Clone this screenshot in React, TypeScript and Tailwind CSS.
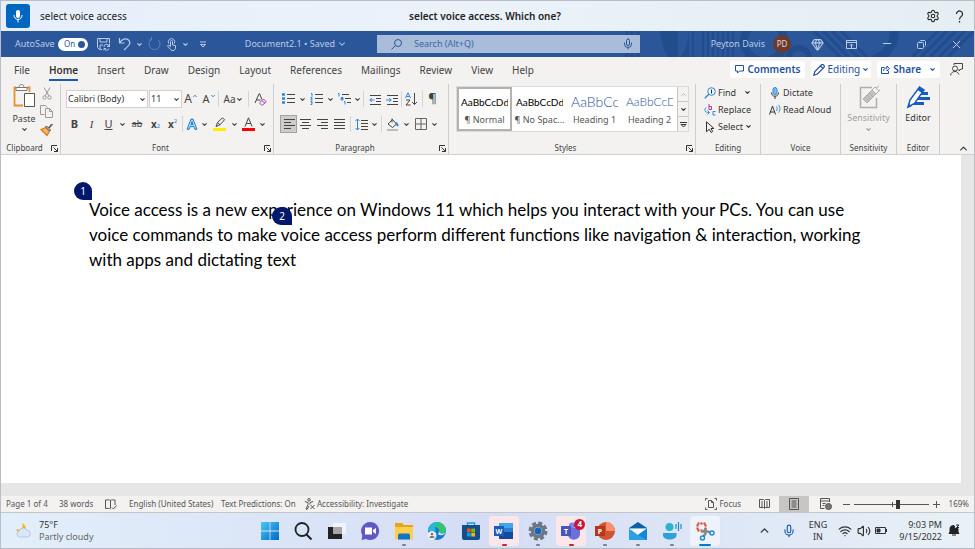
import type { ReactNode } from "react";
import { ChevronDown, ChevronUp, Gem, Mic, Settings, Volume2, Wifi, X } from "lucide-react";

interface IconProps {
  w?: number;
  h?: number;
  children: ReactNode;
}

// 1px line drawing, sized one to one with its viewBox
function Icon({ w = 14, h = 14, children }: IconProps) {
  return (
    <svg width={w} height={h} viewBox={`0 0 ${w} ${h}`} fill="none" stroke="currentColor" strokeWidth="1" className="shrink-0" aria-hidden="true">
      {children}
    </svg>
  );
}

interface ToolProps {
  label: string;
  className?: string;
  children: ReactNode;
}

function Tool({ label, className = "w-[17px]", children }: ToolProps) {
  return (
    <button type="button" aria-label={label} className={`flex h-[18px] shrink-0 items-center justify-center ${className}`}>
      {children}
    </button>
  );
}

function More({ label, className = "w-[10px]" }: { label: string; className?: string }) {
  return (
    <Tool label={label} className={className}>
      <ChevronDown size={7} strokeWidth={4} />
    </Tool>
  );
}

function Sep({ className = "mx-[2px]" }: { className?: string }) {
  return <span className={`h-[16px] w-px shrink-0 bg-[#d6d4d2] ${className}`} />;
}

function Launcher({ label }: { label: string }) {
  return (
    <button type="button" aria-label={label} className="absolute right-[2px] bottom-[2px]">
      <Icon w={7} h={7}>
        <path d="M.5 6V.5H6M2.500 2.500l4 4M6.500 3v3.500H3" />
      </Icon>
    </button>
  );
}

interface GroupProps {
  title: string;
  className: string;
  launcher?: boolean;
  children: ReactNode;
}

function Group({ title, className, launcher, children }: GroupProps) {
  return (
    <section className={`relative flex shrink-0 flex-col border-r border-[#cfcdcb] ${className}`}>
      <div className="h-[58px]">{children}</div>
      <h2 className="text-center text-[8px] leading-[12px] text-[#444]">{title}</h2>
      {launcher && <Launcher label={`${title} settings`} />}
    </section>
  );
}

function VoiceBar() {
  return (
    <header className="flex h-[31px] shrink-0 items-center border-t border-[#b9bec4] bg-gradient-to-r from-[#e6effa] via-[#ebf2fa] to-[#e4eef3] pr-[10px] pl-[5px] text-[10px] text-[#222]">
      <div className="flex flex-1 items-center gap-[10px]">
        <button type="button" aria-label="Microphone" className="flex size-[24px] items-center justify-center rounded-[3px] bg-[#0067c0] text-white">
          <svg width="12" height="14" viewBox="0 0 12 14" aria-hidden="true">
            <rect x="4" y="1" width="4" height="8" rx="2" fill="currentColor" />
            <path d="M2 6.500a4 4 0 0 0 8 0M6 10.500V13" fill="none" stroke="currentColor" strokeWidth="1" strokeLinecap="round" />
          </svg>
        </button>
        <span>select voice access</span>
      </div>
      <strong className="font-semibold">select voice access. Which one?</strong>
      <div className="flex flex-1 items-center justify-end gap-[15px]">
        <button type="button" aria-label="Settings">
          <Settings size={14} strokeWidth={1.8} />
        </button>
        <button type="button" aria-label="Help">
          <Icon w={9} h={13}>
            <path d="M1.500 4a3 3 0 1 1 5 2.200C5.200 7.300 4.500 7.800 4.500 9.500M4.500 11v1.500" strokeWidth="1.200" />
          </Icon>
        </button>
      </div>
    </header>
  );
}

function TitleArt() {
  return (
    <svg className="absolute top-0 right-0 h-full" width="350" height="26" viewBox="0 0 350 26" fill="none" stroke="#214d8c" aria-hidden="true">
      <path d="M3 0v26M8 0v26M14 0v26" strokeWidth="3" />
      <path d="M36 0c1 12 4 18 8 26h10V0zM65 0v26h-8c5-8 7-16 8-26z" fill="#214d8c" stroke="none" />
      <path d="M69 0v26M79 0v26M84 0v26M89 0v26M94 0v26M99 0v26M104 0v26M109 0v26" strokeWidth="2" />
      <circle cx="140" cy="10" r="20" strokeWidth="8" />
      <circle cx="175" cy="27" r="10" strokeWidth="6" />
      <path d="M190 0l26 26M199 0l26 26M208 0l26 26M217 0l26 26" strokeWidth="3" />
      <path d="M270 0c1 14-8 24-20 29" strokeWidth="9" />
      <path d="M288 26l26-26M297 26l26-26M306 26l26-26M315 26l26-26M324 26l26-26" strokeWidth="3" />
    </svg>
  );
}

function TitleBar() {
  return (
    <div className="relative flex h-[26px] shrink-0 items-center bg-[#2b579a] text-[9px] text-[#b9cbe6]">
      <TitleArt />
      <div className="relative flex w-[376px] shrink-0 items-center pl-[14px]">
        <label htmlFor="autosave" className="w-[43px]">AutoSave</label>
        <div className="relative mr-[5px] flex h-[13px] w-[30px] items-center rounded-full bg-white pl-[6px] text-[8px] text-[#2b579a]">
          On
          <span className="absolute right-[3px] size-[7px] rounded-full bg-[#2b579a]" />
          <input id="autosave" type="checkbox" defaultChecked className="absolute inset-0 opacity-0" />
        </div>
        <Tool label="Save" className="w-[20px]">
          <Icon w={13} h={13}>
            <path d="M5 11.500H2.500L.5 9.500V.5h12v5M3 .5V4h7V.5M3 11V7h3" />
            <path d="M7 9a2.500 2.500 0 0 1 5-.5M12.500 6v2.500H10M12 10.500a2.500 2.500 0 0 1-4.500.5M7 12.500V10.500h2" />
          </Icon>
        </Tool>
        <Tool label="Undo" className="w-[23px]">
          <Icon w={13} h={14}>
            <path d="M1.500 1v5h5M1.500 6C4 2 8 .8 10.500 3c3 3 1 5-4.500 10" strokeWidth="1.200" />
          </Icon>
        </Tool>
        <More label="Undo list" className="w-[7px]" />
        <Tool label="Redo" className="w-[22px] text-[#5c82bd]">
          <Icon w={13} h={14}>
            <path d="M3.500 2.500a5.500 5.500 0 1 0 6.500.3M3.500 0v3H.5" />
          </Icon>
        </Tool>
        <Tool label="Touch mode" className="w-[13px]">
          <Icon w={11} h={14}>
            <path d="M4.500 12.500L1.500 9l1-1 2 1.500V4.500a1 1 0 0 1 2 0V8l3 .6v2.900L8 13.500H6z" />
            <path d="M2.800 6.500a3.200 3.200 0 1 1 5.400 0" />
          </Icon>
        </Tool>
        <More label="Touch options" className="w-[15px]" />
        <Tool label="Customize toolbar" className="w-[20px]">
          <Icon w={8} h={7}>
            <path d="M1 1h6M1.500 3.500h5L4 6z" />
          </Icon>
        </Tool>
        <button type="button" className="ml-auto flex items-center gap-[2px] pr-[30px] whitespace-nowrap">
          Document2.1 • Saved
          <ChevronDown size={10} strokeWidth={2.5} />
        </button>
      </div>
      <div className="relative flex h-[18px] w-[263px] items-center bg-[#a9bcd9] px-[14px] text-[#2b579a]">
        <Icon w={11} h={11}>
          <circle cx="7" cy="4" r="3.500" />
          <path d="M4.500 6.500L.5 10.500" />
        </Icon>
        <input type="text" aria-label="Search" placeholder="Search (Alt+Q)" className="ml-[12px] min-w-0 flex-1 bg-transparent outline-none placeholder:text-[#3c67a8]" />
        <button type="button" aria-label="Dictate search" className="-mr-[8px]">
          <Mic size={12} strokeWidth={2} />
        </button>
      </div>
      <div className="relative ml-auto flex items-center">
        <span>Peyton Davis</span>
        <span className="mr-[9px] ml-[8px] flex size-[18px] items-center justify-center rounded-full bg-[#6b3a2e] text-[8px] text-[#e8d8d4]">PD</span>
        <Tool label="Premium" className="w-[34px]">
          <Gem size={13} strokeWidth={2} />
        </Tool>
        <Tool label="Ribbon display options" className="w-[35px]">
          <Icon w={11} h={9}>
            <path d="M.5.5h10v8H.5zM.5 2.500h10M5.500 8V4.200M4 5.500l1.500-1.500L7 5.500" />
          </Icon>
        </Tool>
        <Tool label="Minimize" className="w-[35px]">
          <Icon w={8} h={8}>
            <path d="M0 3.500h8" />
          </Icon>
        </Tool>
        <Tool label="Restore" className="w-[35px]">
          <Icon w={9} h={9}>
            <rect x=".5" y="2.500" width="6" height="6" rx="1" />
            <path d="M2.500 1.500l1-1h4l1 1v4l-1 1" />
          </Icon>
        </Tool>
        <Tool label="Close" className="w-[35px]">
          <Icon w={9} h={9}>
            <path d="M1 1l7 7M8 1L1 8" />
          </Icon>
        </Tool>
      </div>
    </div>
  );
}

const tabs = ["File", "Home", "Insert", "Draw", "Design", "Layout", "References", "Mailings", "Review", "View", "Help"];

function TabRow() {
  return (
    <nav className="flex h-[25px] shrink-0 items-center text-[10px] text-[#444]">
      <div className="flex gap-[19px] pl-[13px]">
        {tabs.map((tab) => (
          <a key={tab} href="#" className={tab === "Home" ? "border-b-2 border-[#185abd] pt-[2px] leading-[18px] font-semibold text-[#333]" : "pt-[2px] leading-[18px]"}>
            {tab}
          </a>
        ))}
      </div>
      <div className="ml-auto flex items-center gap-[6px] pr-[11px] text-[#1f4e9e]">
        <button type="button" className="flex h-[17px] items-center gap-[3px] rounded-[2px] bg-white px-[5px] font-semibold">
          <Icon w={9} h={9}>
            <path d="M.5.5h8v5.500h-4l-2 2V6h-2z" />
          </Icon>
          Comments
        </button>
        <button type="button" className="flex h-[17px] items-center gap-[2px] rounded-[2px] bg-white px-[2px]">
          <Icon w={12} h={12}>
            <path d="M.8 11.200l1-3.700L8.500.8c1.500-1 3.500 1 2.500 2.500L4.400 10zM7.500 2l2.500 2.500" strokeWidth="1.200" />
          </Icon>
          Editing
          <ChevronDown size={7} strokeWidth={4} />
        </button>
        <button type="button" className="flex h-[17px] items-center gap-[3px] rounded-[2px] bg-white px-[4px] font-semibold">
          <Icon w={9} h={9}>
            <path d="M3.500 2.500h-3v6h7V6M2.500 6c0-2 1-3 3.500-3V1l2.500 2.500L6 6V4.300" />
          </Icon>
          Share
          <span className="ml-[5px]">
            <ChevronDown size={7} strokeWidth={4} />
          </span>
        </button>
        <button type="button" aria-label="Presence" className="ml-[4px] text-[#444]">
          <Icon w={13} h={13}>
            <circle cx="5" cy="5.500" r="2.500" />
            <path d="M.5 12.500C1 9.500 3 8.500 5 8.500s3 1 4 3M4 2V.5h8.500V6H11L9 8V6" />
          </Icon>
        </button>
      </div>
    </nav>
  );
}

function Lines({ rows, w = 12 }: { rows: [number, number][]; w?: number }) {
  return (
    <Icon w={w} h={12}>
      {rows.map(([x1, x2], i) => (
        <path key={i} d={`M${x1} ${i * 3 + 1.5}H${x2}`} />
      ))}
    </Icon>
  );
}

function ClipboardGroup() {
  return (
    <Group title="Clipboard" className="w-[60px] pl-[1px] [&>h2]:pr-[13px]" launcher>
      <div className="flex gap-[2px] pl-[10px]">
        <button type="button" className="flex w-[24px] flex-col items-center text-[9px] leading-[13px] text-[#444]">
          <Icon w={24} h={24}>
            <path d="M4 3.500H2.500v18H11M15 3.500h2.500V8" stroke="#e8912d" strokeWidth="1.800" />
            <path d="M4 3.500h11v3H4zM7 3.500c0-4 5-4 5 0" stroke="#777" fill="#fff" />
            <path d="M12.500 9.500h10v13h-10z" stroke="#555" fill="#fff" />
          </Icon>
          <span className="mt-[4px]">Paste</span>
          <ChevronDown size={7} strokeWidth={4} className="mt-[1px]" />
        </button>
        <div className="flex flex-col text-[#9a9a9a]">
          <Tool label="Cut">
            <Icon w={10} h={13}>
              <path d="M2 .5l5 8.500M8 .5L3 9" />
              <circle cx="2.500" cy="10.500" r="1.700" />
              <circle cx="7.500" cy="10.500" r="1.700" />
            </Icon>
          </Tool>
          <Tool label="Copy">
            <Icon w={13} h={13}>
              <path d="M4.500 9.500h-4v-9h5l2 2M5.500 3.500h4l3 3v6h-7zM9.500 3.500v3h3" />
            </Icon>
          </Tool>
          <Tool label="Format painter">
            <Icon w={13} h={13}>
              <path d="M1 6.500l5-2 3.500 3.500-2.500 4.500z" fill="#f7b267" stroke="#e07b1a" strokeWidth="1.300" />
              <path d="M5.500 4l1-1 4 4-1 1zM8.500 5l3-4 1 1-3.500 3" stroke="#444" fill="#fff" />
            </Icon>
          </Tool>
        </div>
      </div>
    </Group>
  );
}

function FontGroup() {
  return (
    <Group title="Font" className="w-[213px] pl-[5px] [&>h2]:pr-[18px]" launcher>
      <div className="flex h-[25px] items-center pt-[5px] text-[#444]">
        <div className="relative flex h-[18px] w-[82px] items-center border border-[#d2d0ce] bg-white">
          <select aria-label="Font" className="w-full appearance-none pl-px text-[9px] text-[#333] outline-none">
            <option>Calibri (Body)</option>
          </select>
          <ChevronDown size={7} strokeWidth={4} className="absolute right-px" />
        </div>
        <div className="relative ml-px flex h-[18px] w-[33px] items-center border border-[#d2d0ce] bg-white">
          <select aria-label="Font size" className="w-full appearance-none pl-px text-[9px] text-[#333] outline-none">
            <option>11</option>
          </select>
          <ChevronDown size={7} strokeWidth={4} className="absolute right-px" />
        </div>
        <Tool label="Grow font" className="w-[18px] text-[12px]">
          A<ChevronUp size={6} strokeWidth={4} color="#2b88d8" className="mb-[7px]" />
        </Tool>
        <Tool label="Shrink font" className="w-[18px] text-[11px]">
          A<ChevronDown size={6} strokeWidth={4} color="#2b88d8" className="mb-[7px]" />
        </Tool>
        <Sep className="mr-[3px]" />
        <Tool label="Change case" className="w-[22px] text-[10px]">
          Aa<ChevronDown size={7} strokeWidth={4} />
        </Tool>
        <Sep className="mx-[4px]" />
        <Tool label="Clear formatting" className="w-[14px]">
          <Icon w={13} h={13}>
            <path d="M1 10L5 .8h.6L8 6.500M2.500 7h4" stroke="#444" />
            <path d="M6 9.500l3.500-3.500 2.700 2.700L8.700 12H7.500L6 10.700zM8 7.500l2.700 2.700" stroke="#a43ab5" />
          </Icon>
        </Tool>
      </div>
      <div className="flex h-[25px] items-center pt-[5px] text-[11px] text-[#444]">
        <Tool label="Bold"><b>B</b></Tool>
        <Tool label="Italic"><i className="font-['Liberation_Serif',serif]">I</i></Tool>
        <Tool label="Underline"><u>U</u></Tool>
        <More label="Underline style" />
        <Tool label="Strikethrough" className="w-[20px] text-[9px]"><s>ab</s></Tool>
        <Tool label="Subscript">
          <b className="text-[10px]">x</b><sub className="text-[6px] text-[#2b88d8]">2</sub>
        </Tool>
        <Tool label="Superscript">
          <b className="text-[10px]">x</b><sup className="text-[6px] text-[#2b88d8]">2</sup>
        </Tool>
        <Sep className="mx-px" />
        <Tool label="Text effects" className="w-[15px]">
          <Icon w={12} h={12}>
            <path d="M1 11.300L5 1h2l4 10.300H8.800L7.800 8.500H4.200l-1 2.800zM5 6.500h2L6 3.500z" stroke="#1a7fd4" fill="#b5dcf7" />
          </Icon>
        </Tool>
        <More label="Text effects list" />
        <Tool label="Highlight" className="w-[20px]">
          <Icon w={13} h={14}>
            <path d="M0 12.500h13" stroke="#ffee00" strokeWidth="3" />
            <path d="M3 9.500l1.500-4L9.500.8l2 2-4.500 5zM4.500 5.500l2.500 2.300" />
          </Icon>
        </Tool>
        <More label="Highlight colour" />
        <Tool label="Font colour" className="w-[18px]">
          <Icon w={13} h={14}>
            <path d="M0 12.500h13" stroke="#f00" strokeWidth="3" />
            <path d="M3 9.500L6.500.8 10 9.500M4.200 6.500h4.600" />
          </Icon>
        </Tool>
        <More label="Font colours" />
      </div>
    </Group>
  );
}

function ParagraphGroup() {
  return (
    <Group title="Paragraph" className="w-[175px] pl-[6px] [&>h2]:pr-[18px]" launcher>
      <div className="flex h-[25px] items-center pt-[5px] text-[#444]">
        <Tool label="Bullets">
          <Icon w={13} h={12}>
            <path d="M5 1.500h8M5 5.500h8M5 9.500h8" />
            <path d="M0 1.500h3M0 5.500h3M0 9.500h3" stroke="#2b88d8" strokeWidth="2.500" />
          </Icon>
        </Tool>
        <More label="Bullet styles" />
        <Tool label="Numbering" className="w-[18px]">
          <Icon w={13} h={12}>
            <path d="M5 1.500h8M5 5.500h8M5 9.500h8" />
            <path d="M1 .5h1v3M.5 4.500H2v1.500H1v1h1.500M.5 8.500H2v3H.5M1 10h1" stroke="#2b88d8" />
          </Icon>
        </Tool>
        <More label="Number styles" />
        <Tool label="Multilevel list" className="w-[18px]">
          <Icon w={13} h={12}>
            <path d="M4 1.500h7M7 5.500h6M9 9.500h4" />
            <path d="M0 .5h1v3M3 4.500h2V7H3V5.500h2M6 8.500h1v3" stroke="#2b88d8" />
          </Icon>
        </Tool>
        <More label="List styles" className="w-[8px]" />
        <Sep className="mx-[2px]" />
        <Tool label="Decrease indent">
          <Icon w={12} h={11}>
            <path d="M1 1.500h11M7 4.500h5M7 7.500h5M1 10.500h11" />
            <path d="M5.500 6H.8M2.800 4l-2 2 2 2" stroke="#2b88d8" />
          </Icon>
        </Tool>
        <Tool label="Increase indent">
          <Icon w={12} h={11}>
            <path d="M1 1.500h11M7 4.500h5M7 7.500h5M1 10.500h11" />
            <path d="M0 6h5.200M3.200 4l2 2-2 2" stroke="#2b88d8" />
          </Icon>
        </Tool>
        <Sep className="mx-px" />
        <Tool label="Sort">
          <Icon w={13} h={14}>
            <path d="M.5 6L3 .8 5.500 6M1.500 4.500h3" stroke="#2b88d8" />
            <path d="M1 8h4L1 13h4.500M9.500 1v11.500M7 10l2.500 2.500L12 10" />
          </Icon>
        </Tool>
        <Sep />
        <Tool label="Show marks" className="w-[15px] text-[13px]">¶</Tool>
      </div>
      <div className="flex h-[25px] items-center pt-[5px] text-[#444]">
        <Tool label="Align left" className="w-[17px] border border-[#a5a3a1] bg-[#cfcdcb]"><Lines rows={[[1, 12], [1, 8], [1, 12], [1, 8]]} /></Tool>
        <Tool label="Align centre"><Lines rows={[[0, 11], [2, 9], [0, 11], [2, 9]]} /></Tool>
        <Tool label="Align right"><Lines rows={[[0, 11], [4, 11], [0, 11], [4, 11]]} /></Tool>
        <Tool label="Justify"><Lines rows={[[0, 11], [0, 11], [0, 11], [0, 11]]} /></Tool>
        <Sep />
        <Tool label="Line spacing">
          <Icon w={13} h={13}>
            <path d="M6 2.500h7M6 5.500h7M6 8.500h7M6 11.500h7" />
            <path d="M2.500 1v11M.5 3l2-2 2 2M.5 10l2 2 2-2" stroke="#2b88d8" />
          </Icon>
        </Tool>
        <More label="Spacing options" className="w-[8px]" />
        <Sep className="mx-[3px]" />
        <Tool label="Shading" className="w-[15px]">
          <Icon w={13} h={13}>
            <path d="M1 12h11" stroke="#aaa" strokeWidth="1.500" />
            <path d="M2 6l4.500-4.500L10.500 6l-4 3.500zM6 .5v4" />
            <path d="M10 4.500l2 3.500" stroke="#2b88d8" strokeWidth="2" />
          </Icon>
        </Tool>
        <More label="Shading colours" className="w-[13px]" />
        <Tool label="Borders" className="w-[15px]">
          <Icon w={12} h={12}>
            <path d="M.5.5h11v11H.5zM6 .5v11M.5 6h11" stroke="#666" />
          </Icon>
        </Tool>
        <More label="Border styles" className="w-[13px]" />
      </div>
    </Group>
  );
}

const styles = [
  { name: "¶ Normal", sample: "text-[10px] text-black", cell: "border-2 border-[#b4b2b0]" },
  { name: "¶ No Spac...", sample: "text-[10px] text-black", cell: "border-2 border-transparent" },
  { name: "Heading 1", sample: "text-[14px] font-light text-[#2f5496]", cell: "border-2 border-transparent" },
  { name: "Heading 2", sample: "text-[12px] font-light text-[#2f5496]", cell: "border-2 border-transparent" },
];

function StylesGroup() {
  return (
    <Group title="Styles" className="w-[247px] pl-[7px] [&>h2]:pr-[20px]" launcher>
      <div className="mt-[2px] flex h-[46px] w-[233px] border border-[#dddbd9] bg-white">
        {styles.map((style) => (
          <button key={style.name} type="button" className={`flex w-[55px] shrink-0 flex-col items-center justify-between py-[3px] ${style.cell}`}>
            <span className={`w-[47px] overflow-hidden text-left font-[Lato,sans-serif] leading-[20px] whitespace-nowrap ${style.sample}`}>AaBbCcDd</span>
            <span className="text-[9px] leading-[12px] whitespace-nowrap text-[#555]">{style.name}</span>
          </button>
        ))}
        <div className="flex flex-1 flex-col divide-y divide-[#c8c6c4] border-l border-[#c8c6c4] bg-[#f3f2f1]">
          <button type="button" aria-label="Previous styles" className="flex flex-1 items-center justify-center text-[#aaa]"><ChevronUp size={7} strokeWidth={3} /></button>
          <button type="button" aria-label="Next styles" className="flex flex-1 items-center justify-center"><ChevronDown size={7} strokeWidth={4} /></button>
          <button type="button" aria-label="All styles" className="flex flex-1 items-center justify-center">
            <Icon w={7} h={7}><path d="M0 1.500h7M1 3.500h5L3.500 6z" /></Icon>
          </button>
        </div>
      </div>
    </Group>
  );
}

function Ribbon() {
  const row = "flex h-[17px] items-center gap-[2px] whitespace-nowrap";
  return (
    <div className="flex h-[73px] shrink-0 border-b border-[#d2d0ce] pt-[2px] text-[#333]">
      <ClipboardGroup />
      <FontGroup />
      <ParagraphGroup />
      <StylesGroup />
      <Group title="Editing" className="w-[65px] pl-[8px] text-[9px] [&>h2]:pr-[8px]">
        <button type="button" className={row}>
          <Icon w={12} h={12}>
            <circle cx="7.500" cy="4.500" r="3.800" stroke="#2b88d8" />
            <path d="M5 7L.8 11.300" stroke="#2b88d8" strokeWidth="1.300" />
            <path d="M7.500 2.500v4" />
          </Icon>
          Find
          <ChevronDown size={7} strokeWidth={4} className="ml-[6px]" />
        </button>
        <button type="button" className={row}>
          <Icon w={12} h={12}>
            <path d="M5 0v5.500h2.500V2.500H5" stroke="#a43ab5" />
            <path d="M11.500 7.500H9v3.500h2.500M2 3.500C0 6 .5 8.500 5 8.500M3.500 6.500l2 2-2 2" stroke="#2b88d8" />
          </Icon>
          Replace
        </button>
        <button type="button" className={row}>
          <Icon w={12} h={12}>
            <path d="M2.500.8v10l2.700-2.500 2 3.200 1.500-1-1.700-3h3z" />
          </Icon>
          Select
          <ChevronDown size={7} strokeWidth={4} />
        </button>
      </Group>
      <Group title="Voice" className="w-[80px] pl-[8px] text-[9px] [&>h2]:pr-[8px]">
        <button type="button" className={row}>
          <Icon w={12} h={12}>
            <rect x="4" y=".5" width="4" height="7" rx="2" fill="#7db9e8" stroke="#2b88d8" />
            <path d="M2.500 5.500c0 5 7 5 7 0M6 9.500V12" />
          </Icon>
          Dictate
        </button>
        <button type="button" className={row}>
          <Icon w={12} h={12}>
            <path d="M.5 10.500L3.500 2l3 8.500M1.500 8h4" />
            <path d="M7.500 2.500c1 1.500 1 3 0 4.500M9.500 1c2 2.500 2 5 0 7.500" stroke="#2b88d8" />
          </Icon>
          Read Aloud
        </button>
      </Group>
      <Group title="Sensitivity" className="w-[56px]">
        <button type="button" disabled className="flex w-full flex-col items-center text-[9px] leading-[13px] text-[#a19f9d]">
          <svg width="24" height="24" viewBox="0 0 24 24" fill="none" stroke="#b0aeac" className="mt-px" aria-hidden="true">
            <path d="M15 2.500H3.500v20h16V13" strokeWidth="1.500" />
            <path d="M6 14l9-9 4 4-9 9z" fill="#c4c2c0" />
            <path d="M8 12l4 4M10 10l4 4M12 8l4 4M15 5l3-3 4 4-3 3M19 3l3-2M21 6l2-1" />
          </svg>
          <span className="mt-[2px]">Sensitivity</span>
          <ChevronDown size={7} strokeWidth={4} className="mt-[2px]" />
        </button>
      </Group>
      <Group title="Editor" className="w-[43px]">
        <button type="button" className="flex w-full flex-col items-center text-[9px] leading-[13px]">
          <svg width="24" height="24" viewBox="0 0 24 24" className="mt-px" aria-hidden="true">
            <path d="M11 8.500h11M9 13.500h15M7 18.500h11" stroke="#185abd" strokeWidth="3" />
            <path d="M2 22l2-7L13.500 2l4.500 3-9.500 13.500z" fill="#fff" stroke="#185abd" strokeWidth="1.500" />
            <path d="M11.500 5l4.500 3L18 5l-4.500-3zM1.500 23l1-4.500L6 21z" fill="#185abd" />
          </svg>
          <span className="mt-[2px]">Editor</span>
        </button>
      </Group>
      <button type="button" aria-label="Collapse ribbon" className="mr-[5px] ml-auto self-end">
        <ChevronUp size={11} strokeWidth={2.5} />
      </button>
    </div>
  );
}

function Badge({ n, className }: { n: number; className: string }) {
  return (
    <span className={`absolute flex h-[18px] items-center justify-center rounded-full rounded-br-none bg-[#00176b] font-['Noto_Sans',sans-serif] text-[10px] text-white ${className}`}>
      {n}
    </span>
  );
}

function DocumentArea() {
  return (
    <main className="flex min-h-0 flex-1 flex-col bg-[#e6e6e6] pb-[13px]">
      <article className="mr-[13px] flex-1 bg-white pt-[42px] pl-[88px]">
        <div className="relative max-w-[790px] font-[Lato,sans-serif] text-[17px] leading-[25px] text-black">
          <p>
            Voice access is a new experience on Windows 11 which helps you interact with your PCs. You can use voice commands to make voice access perform different functions like navigation &amp; interaction, working with apps and dictating text
          </p>
          <Badge n={1} className="-top-[15px] -left-[15px] w-[18px]" />
          <Badge n={2} className="top-[10px] left-[183px] w-[20px]" />
        </div>
      </article>
    </main>
  );
}

function StatusBar() {
  return (
    <footer className="flex h-[17px] shrink-0 items-center border-b border-[#c4c6ca] bg-[#f3f2f1] pr-[5px] pl-[5px] text-[8px] whitespace-nowrap text-[#555]">
      <span className="w-[53px]">Page 1 of 4</span>
      <span className="w-[46px]">38 words</span>
      <button type="button" aria-label="Proofing" className="w-[24px]">
        <Icon w={12} h={11}>
          <path d="M5.500 1.500v8M.5 1c2 0 4-.5 5 .5 1-1 3-.500 4.500-.5v5M.5 1v8.500c2 0 4-.5 5 .5M7 8.500l1.500 1.500 3-3.500" />
        </Icon>
      </button>
      <span className="w-[92px]">English (United States)</span>
      <span className="w-[83px]">Text Predictions: On</span>
      <button type="button" className="flex items-center gap-px">
        <Icon w={12} h={12}>
          <circle cx="5" cy="1.800" r="1.300" />
          <path d="M.8 3.500L4 4.500v2L2 11l1 .5 2-3.500M9.200 3.500L6 4.500v2M6.500 7l4 4M10.500 7l-4 4" />
        </Icon>
        Accessibility: Investigate
      </button>
      <div className="ml-auto flex h-full items-center">
        <button type="button" className="mr-[8px] flex items-center gap-[2px]">
          <Icon w={12} h={12}>
            <path d="M2.500.5h-2v2M9.500.5h2v2M2.500 11.500h-2v-2M9.500 11.500h2v-2M3.500 2.500h3l2 2v5h-5zM6.500 2.500v2h2" />
          </Icon>
          Focus
        </button>
        <button type="button" aria-label="Read mode" className="flex w-[30px] justify-center">
          <Icon w={11} h={10}>
            <path d="M.5.5h4l1 1 1-1h4v8h-4l-1 1-1-1h-4zM5.500 1.500v8M2 3h2M2 5h2M2 7h2M7 3h2M7 5h2M7 7h2" />
          </Icon>
        </button>
        <button type="button" aria-label="Print layout" className="flex h-full w-[30px] items-center justify-center bg-[#c8c6c4]">
          <Icon w={10} h={12}>
            <path d="M.5.5h9v11h-9zM2.500 3h5M2.500 5h5M2.500 7h5M2.500 9h5" />
          </Icon>
        </button>
        <button type="button" aria-label="Web layout" className="flex w-[34px] justify-center">
          <Icon w={12} h={12}>
            <path d="M4.500 10.500h-4V.5h9V4M.5 3h9M2.500 5.500h3M2.500 7.500h2" />
            <circle cx="8.500" cy="8.500" r="3" fill="#777" />
          </Icon>
        </button>
        <button type="button" aria-label="Zoom out" className="mr-[4px]"><Icon w={7} h={7}><path d="M0 3.500h7" /></Icon></button>
        <span className="relative flex w-[75px] items-center">
          <input
            type="range"
            aria-label="Zoom"
            min={0}
            max={100}
            defaultValue={59}
            className="h-px w-full appearance-none bg-[#555] [&::-webkit-slider-thumb]:h-[9px] [&::-webkit-slider-thumb]:w-[4px] [&::-webkit-slider-thumb]:appearance-none [&::-webkit-slider-thumb]:bg-[#333]"
          />
          <span className="absolute left-1/2 h-[5px] w-px bg-[#555]" />
        </span>
        <button type="button" aria-label="Zoom in" className="ml-[4px]"><Icon w={7} h={7}><path d="M0 3.500h7M3.500 0v7" /></Icon></button>
        <span className="w-[29px] text-right">169%</span>
      </div>
    </footer>
  );
}

interface TaskProps {
  label: string;
  tile?: string;
  dot?: string;
  badge?: string;
  children: ReactNode;
}

function Task({ label, tile = "", dot, badge, children }: TaskProps) {
  return (
    <button type="button" aria-label={label} className={`relative flex h-[30px] w-[30px] items-center justify-center rounded-[3px] ${tile}`}>
      <svg width="20" height="20" viewBox="0 0 20 20" aria-hidden="true">{children}</svg>
      {badge && <span className="absolute top-[3px] right-px flex size-[11px] items-center justify-center rounded-full bg-[#c4183c] text-[8px] font-bold text-white">{badge}</span>}
      {dot && <span className={`absolute bottom-0 h-[2px] rounded-full ${dot}`} />}
    </button>
  );
}

function Taskbar() {
  const open = "w-[4px] bg-[#7a808c]";
  const alert = "w-[5px] bg-[#c42b1c]";
  const pink = "bg-[#fbe6ea]";
  return (
    <div className="grid h-[36px] shrink-0 grid-cols-[1fr_466px_1fr] items-center border-b border-[#b5bac4] bg-gradient-to-r from-[#e2effa] via-[#d5ddf5] to-[#e8f1f6] text-[9px] text-[#333]">
      <button type="button" className="flex items-center gap-[7px] pl-[14px] text-left leading-[12px]">
        <svg width="17" height="17" viewBox="0 0 17 17" aria-hidden="true">
          <path d="M7 1c2 4-1 8-6 6 1 5 9 6 10 0 0-3-2-5-4-6z" fill="#f7b31b" />
          <path d="M4.500 15a3.200 3.200 0 0 1 0-6.300 4 4 0 0 1 7.300-.5A3.500 3.500 0 0 1 13 15z" fill="#dbe7f8" stroke="#a9bfe2" strokeWidth=".8" />
        </svg>
        <span>
          75°F
          <span className="block text-[#666]">Partly cloudy</span>
        </span>
      </button>
      <nav className="flex items-center justify-between">
        <Task label="Start">
          <defs>
            <linearGradient id="win" x1="0" y1="0" x2="1" y2="1"><stop stopColor="#4cc8f4" /><stop offset="1" stopColor="#0069c8" /></linearGradient>
          </defs>
          <path d="M1 1h8.600v8.600H1zM10.400 1H19v8.600h-8.600zM1 10.400h8.600V19H1zM10.400 10.400H19V19h-8.600z" fill="url(#win)" />
        </Task>
        <Task label="Search">
          <circle cx="9" cy="8.500" r="6.500" fill="none" stroke="#222" strokeWidth="1.800" />
          <path d="M13.500 13.500l5 5" stroke="#222" strokeWidth="2" />
        </Task>
        <Task label="Task view">
          <path d="M1 6h14v12H1z" fill="#222" />
          <path d="M6 2h13v11H6z" fill="#fff" opacity=".6" />
        </Task>
        <Task label="Chat">
          <path d="M10 1a9 9 0 1 1-4 17l-4.500 1 .8-4.500A9 9 0 0 1 10 1z" fill="#6158c4" />
          <path d="M5 6.500h7v7H5zM13 9l3-2v6l-3-2z" fill="#fff" />
        </Task>
        <Task label="File Explorer" dot={open}>
          <path d="M1 2h7l2 2h9v14H1z" fill="#e8a317" />
          <path d="M1 6h18v12.500H1z" fill="#fccf4d" />
          <path d="M4 18.500V14l1-1.500h10l1 1.500v4.500z" fill="#1473c8" />
        </Task>
        <Task label="Edge">
          <circle cx="10" cy="10" r="9" fill="#1679cc" />
          <path d="M1.500 7C4-1 18-1 19 9c0 4-6 5-7 2 1-5-6-7-10.500-4z" fill="#35c46f" />
          <path d="M1 10c0-6 8-11 13-8-5 0-7 4-5 8z" fill="#2ab5dc" />
          <path d="M12 10.500c1 3 5 2.500 7 .5-1 3-4.500 4-8 2.500z" fill="#d8e4f7" />
          <circle cx="5" cy="14.500" r="4.500" fill="#eee" />
          <circle cx="5" cy="13" r="1.300" fill="#777" />
          <path d="M2.500 17c0-3 5-3 5 0z" fill="#777" />
        </Task>
        <Task label="Store">
          <path d="M6.500 5V2h7v3" fill="none" stroke="#1b9be0" strokeWidth="1.500" />
          <path d="M1 4h18v13q0 2-2 2H3q-2 0-2-2z" fill="#124f8c" />
          <path d="M6 7.500h3.700v3.700H6z" fill="#f25022" />
          <path d="M10.300 7.500H14v3.700h-3.700z" fill="#7fba00" />
          <path d="M6 11.800h3.700v3.700H6z" fill="#00a4ef" />
          <path d="M10.300 11.800H14v3.700h-3.700z" fill="#ffb900" />
        </Task>
        <Task label="Word" tile={pink} dot={alert}>
          <path d="M5 2h14v5H5z" fill="#41a5ee" />
          <path d="M5 7h14v4H5z" fill="#2b7cd3" />
          <path d="M5 11h14v7H5z" fill="#124a9c" />
          <path d="M0 5h10v10H0z" fill="#185abd" />
          <text x="5" y="12.500" textAnchor="middle" fontSize="7" fontWeight="700" fill="#fff">W</text>
        </Task>
        <Task label="Settings" dot={open}>
          <circle cx="10" cy="10" r="8" fill="none" stroke="#6d7684" strokeWidth="3" strokeDasharray="4 2.280" />
          <circle cx="10" cy="10" r="5.500" fill="#dfe5ee" stroke="#6d7684" strokeWidth="3.500" />
          <circle cx="10" cy="10" r="3.500" fill="#1166bb" />
        </Task>
        <Task label="Teams" tile={pink} dot={alert} badge="4">
          <circle cx="11" cy="4.500" r="3" fill="#7b83eb" />
          <path d="M7 7h12v6c0 7-12 8-12 0z" fill="#6a70d8" />
          <path d="M0 5h10v10H0z" fill="#4b53bc" />
          <text x="5" y="12.500" textAnchor="middle" fontSize="7" fontWeight="700" fill="#fff">T</text>
        </Task>
        <Task label="PowerPoint" dot={open}>
          <circle cx="11" cy="10" r="9" fill="#d35230" />
          <path d="M11 1a9 9 0 0 1 9 9h-9z" fill="#ff8f6b" />
          <path d="M0 5h10v10H0z" fill="#b7361a" />
          <text x="5" y="12.500" textAnchor="middle" fontSize="7" fontWeight="700" fill="#fff">P</text>
        </Task>
        <Task label="Mail" dot={open}>
          <path d="M1 7l9-6 9 6v4H1z" fill="#0f5ea8" />
          <path d="M1 7.500h18V19H1z" fill="#2aa0e8" />
          <path d="M1 7.500h18l-9 6.500z" fill="#f4f8fd" />
          <path d="M19 7.500V19L10 14z" fill="#1683d8" />
        </Task>
        <Task label="Voice access" dot={open}>
          <circle cx="7.500" cy="6" r="4" fill="#2bb5cf" />
          <path d="M1 12h13.500v2c0 6-13.500 6-13.500 0z" fill="#2e9fd8" />
          <path d="M14 3v5M16.500 1v9M19 3v5" stroke="#1f8ad0" strokeWidth="1.200" />
        </Task>
        <Task label="Snipping Tool" tile="bg-[#edf2fb]" dot="w-[12px] bg-[#0078d4]">
          <path d="M2.500 2.500h8v7h-8z" fill="none" stroke="#d83b1f" strokeWidth="2" strokeDasharray="2 1" />
          <path d="M10.500 7v5.500l-2 3M6 10.500h7l3 1.500" fill="none" stroke="#888" strokeWidth="2.500" />
          <circle cx="7.500" cy="17" r="2" fill="#edf2fb" stroke="#1a8ad8" strokeWidth="1.400" />
          <circle cx="17" cy="12" r="2" fill="#edf2fb" stroke="#1a8ad8" strokeWidth="1.400" />
        </Task>
      </nav>
      <div className="flex items-center justify-end pr-[14px] leading-[12px]">
        <Tool label="Hidden icons" className="w-[20px]"><ChevronUp size={13} strokeWidth={2.5} /></Tool>
        <Tool label="Microphone" className="w-[30px] text-[#1f5fb4]"><Mic size={14} strokeWidth={2} /></Tool>
        <span className="w-[28px] text-center">ENG<br />IN</span>
        <span className="ml-[6px] flex w-[50px] items-center justify-between">
          <Wifi size={14} strokeWidth={2.2} />
          <Volume2 size={14} strokeWidth={2} />
          <Icon w={13} h={9}>
            <path d="M.5 1.500h10v6H.5zM11.500 3v3" />
            <path d="M2 3h3v3H2z" fill="#333" />
          </Icon>
        </span>
        <span className="w-[54px] text-right">9:03 PM<br />9/15/2022</span>
        <button type="button" aria-label="Notifications" className="ml-[6px]">
          <Icon w={12} h={13}>
            <path d="M1 9.500l1-1.500V5c0-3 2-3.500 4-3.500l1 3h3V8l1 1.500zM4 11h4" fill="#222" stroke="#222" />
            <path d="M8 1h3L8.500 3.500H11" stroke="#222" />
          </Icon>
        </button>
      </div>
    </div>
  );
}

export default function App() {
  return (
    <div className="flex h-screen flex-col overflow-hidden border-x border-[#b9bec4] bg-[#f3f2f1] font-['Noto_Sans','Open_Sans',sans-serif]">
      <VoiceBar />
      <TitleBar />
      <TabRow />
      <Ribbon />
      <DocumentArea />
      <StatusBar />
      <Taskbar />
    </div>
  );
}
